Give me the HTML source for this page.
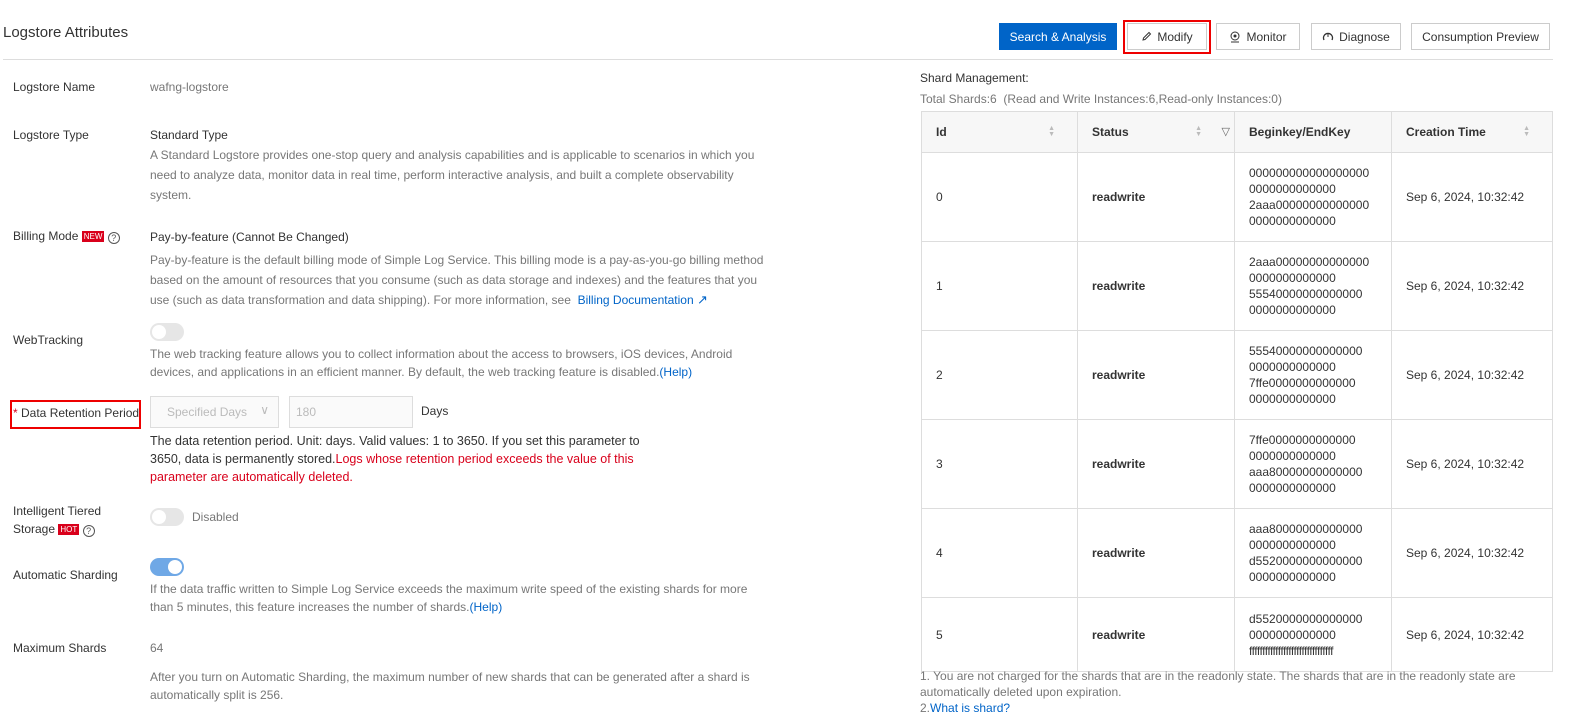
<!DOCTYPE html>
<html><head><meta charset="utf-8"><style>
*{box-sizing:border-box;margin:0;padding:0}
body{width:1594px;height:726px;background:#fff;font-family:"Liberation Sans",Arial,sans-serif;font-size:12px;color:#333;position:relative;overflow:hidden}
.a{position:absolute}
.lbl{position:absolute;left:13px;color:#333;font-size:12px}
.val{position:absolute;left:150px;color:#333}
.desc{position:absolute;left:150px;color:#777;line-height:20px;width:620px}
.btn{position:absolute;top:23px;height:27px;border:1px solid #ccc;background:#fff;font-size:12px;color:#333;display:flex;align-items:center;justify-content:center;gap:5px}
.blue{color:#0064c8}
.red{color:#d9001b}
.sw{position:absolute;left:150px;width:34px;height:18px;border-radius:9px;background:#e6e6e6}
.sw:after{content:"";position:absolute;top:2px;left:2px;width:14px;height:14px;border-radius:50%;background:#fff}
.sw.on{background:#6fa8e6}
.sw.on:after{left:18px}
.tag{display:inline-block;background:#d9001b;color:#fff;font-size:8px;padding:0 2px;line-height:11px;vertical-align:1px}
.q{display:inline-block;width:12px;height:12px;border:1px solid #555;border-radius:50%;font-size:9px;line-height:10px;text-align:center;color:#555;vertical-align:-1px}
table{position:absolute;left:921px;top:111px;width:632px;border-collapse:collapse;font-size:12px;table-layout:fixed}
td,th{border:1px solid #ddd;padding:0 0 0 14px;text-align:left;vertical-align:middle;overflow:hidden}
th{background:#f7f7f7;font-weight:bold;color:#333;position:relative}
tr.h{height:41px}
tr.r{height:89px}
tr.l{height:74px}
td{color:#333}
td.k{line-height:16px;font-size:12px;white-space:nowrap}
.sort{position:absolute;right:22px;top:14px;color:#bbb;font-size:7px;line-height:6px}
</style></head><body>
<div class="a" style="left:3px;top:24px;font-size:15px;color:#333">Logstore Attributes</div>
<div class="a" style="left:3px;top:59px;width:1550px;height:1px;background:#ddd"></div>

<div class="btn" style="left:999px;width:118px;background:#0064c8;border-color:#0064c8;color:#fff">Search &amp; Analysis</div>
<div class="a" style="left:1123px;top:20px;width:88px;height:34px;border:2px solid #e00"></div>
<div class="btn" style="left:1127px;width:80px"><svg width="11" height="11" viewBox="0 0 11 11"><path d="M2 9 L2.5 7 L8 1.5 L9.5 3 L4 8.5 Z" fill="none" stroke="#333"/></svg>Modify</div>
<div class="btn" style="left:1216px;width:84px"><svg width="12" height="12" viewBox="0 0 12 12"><circle cx="6" cy="5" r="4" fill="none" stroke="#333"/><circle cx="6" cy="5" r="1.5" fill="#333"/><path d="M2 11 H10" stroke="#333"/></svg>Monitor</div>
<div class="btn" style="left:1311px;width:90px"><svg width="12" height="12" viewBox="0 0 12 12"><path d="M2 9 A4.5 4.5 0 1 1 10 9" fill="none" stroke="#333" stroke-width="1.3"/><path d="M6 6 L6 3" stroke="#333"/></svg>Diagnose</div>
<div class="btn" style="left:1411px;width:139px">Consumption Preview</div>

<div class="lbl" style="top:80px">Logstore Name</div>
<div class="val" style="top:80px;color:#777">wafng-logstore</div>

<div class="lbl" style="top:128px">Logstore Type</div>
<div class="val" style="top:128px">Standard Type</div>
<div class="desc" style="top:145px">A Standard Logstore provides one-stop query and analysis capabilities and is applicable to scenarios in which you need to analyze data, monitor data in real time, perform interactive analysis, and built a complete observability system.</div>

<div class="lbl" style="top:229px">Billing Mode <span class="tag">NEW</span> <span class="q">?</span></div>
<div class="val" style="top:230px">Pay-by-feature (Cannot Be Changed)</div>
<div class="desc" style="top:250px">Pay-by-feature is the default billing mode of Simple Log Service. This billing mode is a pay-as-you-go billing method based on the amount of resources that you consume (such as data storage and indexes) and the features that you use (such as data transformation and data shipping). For more information, see &nbsp;<span class="blue">Billing Documentation</span> <span class="blue" style="font-size:13px">&#x2197;</span></div>

<div class="lbl" style="top:333px">WebTracking</div>
<div class="sw" style="top:323px"></div>
<div class="desc" style="top:345px;line-height:18px">The web tracking feature allows you to collect information about the access to browsers, iOS devices, Android devices, and applications in an efficient manner. By default, the web tracking feature is disabled.<span class="blue">(Help)</span></div>

<div class="lbl" style="top:406px;left:13px"><span class="red">*</span> Data Retention Period</div>
<div class="a" style="left:10px;top:400px;width:131px;height:29px;border:2px solid #e00"></div>
<div class="a" style="left:150px;top:396px;width:129px;height:32px;border:1px solid #ddd;background:#fafafa;color:#bbb;padding:8px 16px">Specified Days <span style="position:absolute;right:9px;top:6px;font-size:12px">&#x2228;</span></div>
<div class="a" style="left:289px;top:396px;width:124px;height:32px;border:1px solid #ddd;background:#fafafa;color:#bbb;padding:8px 6px">180</div>
<div class="a" style="left:421px;top:404px">Days</div>
<div class="a" style="left:150px;top:432px;width:520px;line-height:18px;font-size:12.5px;color:#333">The data retention period. Unit: days. Valid values: 1 to 3650. If you set this parameter to 3650, data is permanently stored.<span class="red">Logs whose retention period exceeds the value of this parameter are automatically deleted.</span></div>

<div class="lbl" style="top:502px;line-height:18px">Intelligent Tiered<br>Storage <span class="tag">HOT</span> <span class="q">?</span></div>
<div class="sw" style="top:508px"></div>
<div class="a" style="left:192px;top:510px;color:#777">Disabled</div>

<div class="lbl" style="top:568px">Automatic Sharding</div>
<div class="sw on" style="top:558px"></div>
<div class="desc" style="top:580px;line-height:18px">If the data traffic written to Simple Log Service exceeds the maximum write speed of the existing shards for more than 5 minutes, this feature increases the number of shards.<span class="blue">(Help)</span></div>

<div class="lbl" style="top:641px">Maximum Shards</div>
<div class="val" style="top:641px;color:#777">64</div>
<div class="desc" style="top:668px;line-height:18px">After you turn on Automatic Sharding, the maximum number of new shards that can be generated after a shard is automatically split is 256.</div>

<div class="a" style="left:920px;top:71px">Shard Management:</div>
<div class="a" style="left:920px;top:92px;color:#777">Total Shards:6 &nbsp;(Read and Write Instances:6,Read-only Instances:0)</div>

<table>
<colgroup><col style="width:156px"><col style="width:157px"><col style="width:157px"><col></colgroup>
<tr class="h"><th>Id<span class="sort">&#9650;<br>&#9660;</span></th><th>Status<span class="sort" style="right:32px">&#9650;<br>&#9660;</span><span style="position:absolute;right:4px;top:13px;color:#666;font-weight:normal;font-size:11px">&#x25BD;</span></th><th>Beginkey/EndKey</th><th>Creation Time<span class="sort">&#9650;<br>&#9660;</span></th></tr>
<tr class="r"><td>0</td><td><b>readwrite</b></td><td class="k">000000000000000000<br>0000000000000<br>2aaa00000000000000<br>0000000000000</td><td>Sep 6, 2024, 10:32:42</td></tr>
<tr class="r"><td>1</td><td><b>readwrite</b></td><td class="k">2aaa00000000000000<br>0000000000000<br>55540000000000000<br>0000000000000</td><td>Sep 6, 2024, 10:32:42</td></tr>
<tr class="r"><td>2</td><td><b>readwrite</b></td><td class="k">55540000000000000<br>0000000000000<br>7ffe0000000000000<br>0000000000000</td><td>Sep 6, 2024, 10:32:42</td></tr>
<tr class="r"><td>3</td><td><b>readwrite</b></td><td class="k">7ffe0000000000000<br>0000000000000<br>aaa80000000000000<br>0000000000000</td><td>Sep 6, 2024, 10:32:42</td></tr>
<tr class="r"><td>4</td><td><b>readwrite</b></td><td class="k">aaa80000000000000<br>0000000000000<br>d5520000000000000<br>0000000000000</td><td>Sep 6, 2024, 10:32:42</td></tr>
<tr class="l"><td>5</td><td><b>readwrite</b></td><td class="k">d5520000000000000<br>0000000000000<br><span style="letter-spacing:-0.5px">ffffffffffffffffffffffffffffffff</span></td><td>Sep 6, 2024, 10:32:42</td></tr>
</table>

<div class="a" style="left:920px;top:668px;width:620px;line-height:16px;color:#777">1. You are not charged for the shards that are in the readonly state. The shards that are in the readonly state are automatically deleted upon expiration.<br>2.<span class="blue">What is shard?</span></div>
</body></html>
